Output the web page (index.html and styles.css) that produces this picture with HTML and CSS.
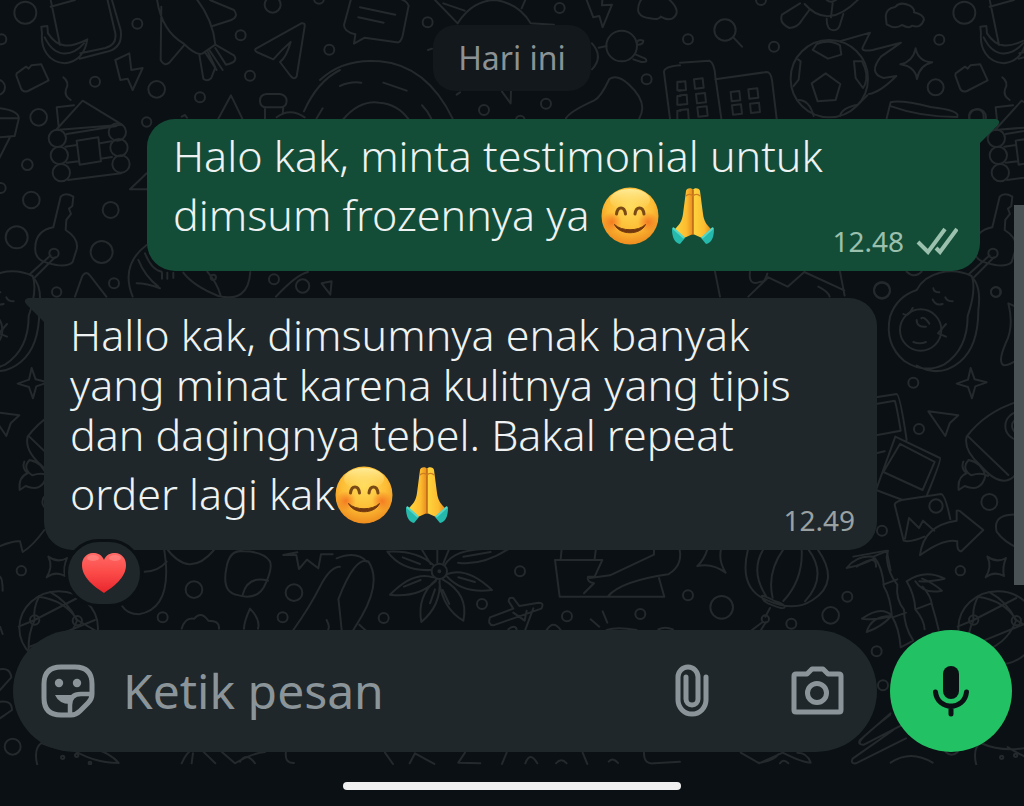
FILE: index.html
```html
<!DOCTYPE html>
<html lang="id">
<head>
<meta charset="utf-8">
<meta name="viewport" content="width=device-width, initial-scale=1">
<title>Chat</title>
<link rel="stylesheet" href="styles.css">
</head>
<body>
<svg class="defs" aria-hidden="true">
  <defs>
    <radialGradient id="face" cx=".5" cy=".35" r=".65"><stop offset="0" stop-color="#ffdc5a"/><stop offset=".6" stop-color="#fdbd35"/><stop offset="1" stop-color="#ee8d1f"/></radialGradient>
    <radialGradient id="blush"><stop offset="0" stop-color="#f2661d" stop-opacity=".75"/><stop offset="1" stop-color="#f2661d" stop-opacity="0"/></radialGradient>
    <linearGradient id="shine" x2="0" y2="1"><stop offset="0" stop-color="#fff0a0" stop-opacity=".9"/><stop offset="1" stop-color="#ffe070" stop-opacity="0"/></linearGradient>
    <linearGradient id="hand" x2="1" y2="0"><stop offset="0" stop-color="#ffd53f"/><stop offset=".65" stop-color="#fcbb2f"/><stop offset="1" stop-color="#e88a1c"/></linearGradient>
    <linearGradient id="heart" x2="0" y2="1"><stop offset="0" stop-color="#ff6a66"/><stop offset=".5" stop-color="#fb4a48"/><stop offset="1" stop-color="#e8252b"/></linearGradient>
    <symbol id="smile" viewBox="0 0 58 58">
      <circle cx="29" cy="29" r="28.5" fill="url(#face)"/>
      <ellipse cx="29" cy="13" rx="20" ry="11" fill="url(#shine)"/>
      <circle cx="11" cy="35" r="10" fill="url(#blush)"/><circle cx="47" cy="35" r="10" fill="url(#blush)"/>
      <path d="M15.500 27c1-8 8-8 9 0M34 27c1-8 8-8 9 0" fill="none" stroke="#7a4a16" stroke-width="3" stroke-linecap="round"/>
      <path d="M13.500 37.500c7 7 24 7 31 0-5 11-26 11-31 0z" fill="#71380f" stroke="#71380f" stroke-width="1" stroke-linejoin="round"/>
    </symbol>
    <symbol id="pray" viewBox="0 0 58 58">
      <path d="M22 4c0-3 6-4 7-1v44l-9 4-9-9c5-5 7-8 8-15z" fill="url(#hand)"/>
      <path d="M36 4c0-3-6-4-7-1v44l9 4 9-9c-5-5-7-8-8-15z" fill="url(#hand)"/>
      <path d="M29 3v45" stroke="#b8661a" stroke-width="1.500"/>
      <path d="M22 9c2-2 5-2 7 0 2-2 5-2 7 0" fill="none" stroke="#ce7d20" stroke-width="1.500"/>
      <path d="M9 40l12 11-5 6c-5-1-8-6-8-15z" fill="#25b9ac"/><path d="M49 40L37 51l5 6c5-1 8-6 8-15z" fill="#25b9ac"/>
      <path d="M9 41l11 10M49 41L38 51" stroke="#55d8c8" stroke-width="2"/>
    </symbol>
  </defs>
</svg>

<main class="chat">
  <svg class="doodles" viewBox="0 0 1024 765" preserveAspectRatio="xMinYMin slice" aria-hidden="true">
    <defs>
      <g id="edge">
        <g transform="scale(.3333)">
          <path d="M148-20L180 135M318-20l28 120q5 35-30 44l-75 16M330-20l32 110q8 55-45 66l-78 20M152 20L225 0M124 80l18-2 2 22c28 42 60 48 118 18-8 50-35 68-68 72-50-4-72-45-68-90zM134 112c32 65 82 58 118 18"/>
          <path d="M50 220l28-20 8 6 8-10 30-3 22 48-62 32q-16 5-21-8l-14-38zM190 232q20 14 8 36-6 20 14 32"/>
          <path d="M168 390l80-88 118 72zM176 380l-6-58 52-6M200 402l150-24M196 440l34-5M200 488l36-4M204 540l160-20M300 430l34-6M302 476l34-5M230 422l65-10 8 72-64 10z"/>
          <circle cx="172" cy="415" r="26"/><circle cx="178" cy="466" r="26"/><circle cx="184" cy="518" r="26"/><circle cx="352" cy="396" r="26"/><circle cx="357" cy="443" r="26"/><circle cx="363" cy="492" r="26"/>
          <path d="M160 682l22-92q14-14 38 0l-3 28-10 8 6 16-14 18-2 30q40 25 33 58l-12 38q-20 20-78 2-38-10-34-48 2-48 54-58zM152 766L90 822M165 772l-60 60"/>
          <circle cx="162" cy="760" r="14"/><circle cx="76" cy="38" r="33"/><circle cx="116" cy="352" r="25"/><circle cx="82" cy="494" r="16"/><circle cx="94" cy="600" r="25"/><circle cx="50" cy="712" r="33"/><circle cx="170" cy="876" r="14"/>
        </g>
        <g transform="translate(0 530) scale(.3333)">
          <path d="M145 80q28 20 56 4M140 142q26-20 55-4M145 80q15 30-5 62M201 84q-12 28-6 54"/>
          <ellipse cx="176" cy="294" rx="118" ry="110"/>
          <path d="M118 198q-20 38-14 72l-48 20M104 270q-20 40-18 90M104 270l128-66M115 200q80 10 117 70l64 38M232 270q-30 80-120 100M150 186q55 30 80 84M90 350l195-80"/>
          <circle cx="104" cy="270" r="14"/><circle cx="232" cy="272" r="14"/><circle cx="64" cy="122" r="14"/><circle cx="38" cy="650" r="24"/>
          <path d="M112 705q-12-48 12-66 70 30 150 12 60 20 82 48-80 0-150-48M0 480l34-38q-4-30-34-24M0 565l36-25q0-30-36-25"/>
          <circle cx="188" cy="682" r="5"/><circle cx="230" cy="676" r="5"/><circle cx="270" cy="699" r="4"/>
        </g>
      </g>
      <g id="fruit" transform="translate(860 270) scale(.3333)">
        <path d="M90 140q20-60 80-80Q190 20 240 8t95 10q15 40-12 120 0 100-70 145-60 30-120-10-60-50-43-133zM335 20q30 30 20 100 0 110-55 155-60 50-130 12M220 55q2 12 18 12M256 82q5 12 22 12M218 88q8 20 30 14M170 150q0 22 28 20M184 145q8-8 24 16M160 216q20 8 38 0"/>
        <circle cx="182" cy="180" r="62"/><path d="M130 132q15 10 28-18M258 162l-24 28 24 10"/>
        <path d="M332 294l12 34 36 9-34 12-10 36-12-34-34-10 34-12zM205 424l90 12-26 24-13 38z"/>
        <path d="M490 390q-110 30-170 110-10 40 40 85 60 70 100 36l80-80M325 500l120 115M310 575q-8 20 10 35-28 10-24 50l18-12q50 20 62-30-10-40-50-48-24 24 8 46 30-10 50 2"/>
        <circle cx="478" cy="468" r="42"/><circle cx="478" cy="468" r="22"/><circle cx="388" cy="696" r="24"/>
        <path d="M490 120l-45-20q18 70-8 120-25 58-5 66 20 0 58-30M490 735q-95-10-80 50 28 40 90 58"/>
      </g>
    </defs>
    <use href="#edge"/><use href="#edge" x="939"/>
    <use href="#fruit"/><use href="#fruit" x="-939"/>
    <g transform="scale(.3333)">
      <path d="M470-10q12 100 80 140 40 40 58 30l38-26q-8-80-62-144M484 20l-2 160q10 20 26 8l44-52M630 0l72 30q15 20-8 30l-56 18M600 164l-2 0 12 72q12 10 24-2l12-32-22-46M646 134l56 32q15 20-24 28l-32-50M616 158l34 52M628 150l40 60"/>
      <path d="M768 146L904 70q12-2 10 10l-24 150q-8 10-18-2l-32-42q20-15 32-60-26 22-52 52l-50-22q-8-6-2-10zM346 180l42-20 6 50 34-6-30 66-15-34-22 4z"/>
      <path d="M655 356l38-70 34 70M545 350l10-5 6 8M780 302q0-18 20-20h40q20 4 20 20 0 20-20 20h-40q-20 0-20-20zM795 324v32M850 322l-2 20M830 352q40-30 84 0M912 334q40-90 108-124M968 325l-18 30M440 520l-50 48h52M0 325q60 8 56 32L44 408 0 412M0 355h56M30 412L-10 490"/>
      <path d="M440 735q-80 60-42 155M410 850q30 0 70 15M415 780q20 50 60 80M435 760q20 50 50 55M486 818v18M502 818v18M520 818v16M550 818q30 40 105 70 90 22 96-72M622 815q30 35 40 72M828 890q60-65 96-74M965 850l30-6-4 40zM225 890l22-62q12-18 24 0l48 62"/>
      <circle cx="908" cy="858" r="20"/><circle cx="640" cy="832" r="8"/>
      <circle cx="412" cy="71" r="15"/><circle cx="722" cy="106" r="15"/><circle cx="988" cy="149" r="15"/><circle cx="750" cy="227" r="15"/><circle cx="600" cy="292" r="15"/><circle cx="470" cy="268" r="25"/><circle cx="440" cy="366" r="14"/><circle cx="285" cy="245" r="15"/><circle cx="332" cy="630" r="24"/><circle cx="305" cy="756" r="33"/><circle cx="342" cy="850" r="15"/><circle cx="822" cy="838" r="15"/><circle cx="818" cy="14" r="24"/><circle cx="4" cy="118" r="15"/><circle cx="-8" cy="262" r="23"/><circle cx="2" cy="564" r="15"/><circle cx="957" cy="-4" r="15"/>
    </g>
    <g transform="translate(340) scale(.3333)">
      <path d="M35-10L12 75q0 20 34 28l-4 28 32-18 96 14q12 2 18-20l18-90q-5-15-30-22M60 22l106 22M55 52l76 16M285 0l68 70q45-70 115-70 70 12 104 70l70 4M310 10l64 22M545 25l12-28M264 150l12-4M740 0l20 52 18-4 10 34 28-68-30 2 2-26M900 5q-20 45 30 50 25 6 32-5 20 12 36 5 28-20-8-54-20-25-48-8-30-10-42 12z"/>
      <circle cx="845" cy="138" r="46"/><path d="M756 130q36 40 0 78M800 138l-24 5M890 128q5-12 20-6 0 12-18 12M888 164l28 12q10 12-12 10l-24-8"/>
      <path d="M-60 240q70-66 180-56 140 12 218 172M8 360q50-60 110-52 55 4 88 50M0 258q30-14 64-10M130 248l70 24M246 316q18 18 28 40M350 284l10-7M486 275l26 35 1-36M678 355q10-20 85-54 20-10 45-64 24-16 58 16 60 55 32 102M990 356l-18-140q0-16 48-20M1022 245h-10v26h10M1022 288h-10v26h10M1022 332h-10v25"/>
      <circle cx="263" cy="67" r="15"/><circle cx="659" cy="24" r="15"/><circle cx="432" cy="330" r="15"/><circle cx="618" cy="311" r="15"/><circle cx="920" cy="238" r="15"/><circle cx="541" cy="360" r="13"/>
    </g>
    <g transform="translate(680) scale(.3333)">
      <circle cx="135" cy="90" r="32"/><path d="M160 112l26 28M360 10l-54 34q-10 25 22 40 26-2 38-24l22-30M374 12q70 80 162-15M440 0q12 10 28 0M458 10l-5 42M440 56q0 34 20 35 18 0 22-24l8-25M618 55q-5-28 28-34 14-18 44-4 15 10 12 20 30 8 30 22-10 28-36 18-8 10-30-2-20 14-46-2z"/>
      <circle cx="448" cy="236" r="116"/><path d="M395 250l42-30 44 32-14 48-54 4zM398 150l12-18q40-16 70 4l4 28-40 12zM354 178l8 6-6 55-16 20M522 184h24q22 40 8 72l-5 8-22-30zM356 300q32 0 45 48M480 348q5-25 54-34l28-28M480 124l90-26-22 44q-5 14 30 8l85-22-60 42q-40 50 8 64l38-6q-50 50-82 54"/>
      <path d="M0 188l88-6q16 8 18 48l18 126M106 238l154-22q12 0 16 24l14 116M-6 246l22-2 2 26-22 2M42 238l26-3 3 28-26 3zM0 286l20-2 2 28-22 2M48 282l27-3 3 28-27 3zM0 330l24-2 2 28M52 322l28-3 3 28-28 3zM152 276l26-3 3 28-26 3zM205 268l27-3 3 28-27 3zM156 316l27-3 3 28-27 3zM210 311l27-3 3 28-27 3z"/>
      <path d="M620 355l12-48q30-8 120 14 90 10 80 30-110 0-198-32M707 145q8 40 50 42-38 8-46 50-6-38-50-44 38-8 46-48zM868 356q-5-28 26-28 20 4 17 28"/>
      <circle cx="24" cy="118" r="15"/><circle cx="282" cy="140" r="15"/><circle cx="778" cy="119" r="15"/><circle cx="767" cy="262" r="24"/><circle cx="243" cy="0" r="15"/><circle cx="606" cy="870" r="24"/>
      <path d="M105 815l15 75M210 815q-6 45 32 30 12 5 20-24M205 890l60-58 58 28 50-44 120 55M480 815l14 72M415 860q30 15 34 30M680 815q25 22 45 0"/>
    </g>
    <g transform="translate(860 270) scale(.3333)">
      <path d="M48 382l62-10q10 2 30 138M48 402l56-10q5 10 18 90l-74 14M106 500l134 64q5 5-40 114M106 500L48 660M48 550l26-6M48 660l80 30M120 522l104 54-36 84-118-54zM125 690q-25 8-20 18l26 104q20 6 62-12M125 690l118-18q12 0 28 76M135 806l12-62 30 30 12-22 34 30M180 856q10-90 110-104v-30q10-2 15 6l65 52-66 64q-14 0-12-30-40-10-112 42zM-20 860l100-18 12 60M-10 890q60-40 58 0"/>
      <circle cx="228" cy="708" r="20"/><circle cx="66" cy="62" r="24"/><circle cx="408" cy="66" r="15"/><circle cx="160" cy="338" r="15"/><circle cx="177" cy="477" r="15"/><circle cx="66" cy="782" r="15"/>
    </g>
    <g transform="translate(0 530) scale(.3333)">
      <path d="M0 48q40-16 60-14l8 32q30-18 65-66M0 140q8 5 8 42M0 290l8 22M492 55q30 180-75 198-35 0-50-24M434 125q40 0 66-30M496 50q70 100 146 10M680 110q10-52 50-46 60 0 80 30 8 20-12 64-22 58-90 36-44-10-28-84zM728 194q16-58 76-42M850 75l42-8M855 75h34l8 42 24-28 34 26 8-42h35M545 296q10-35 38-30 20-25 42 6 35 0 32 24M732 296q0-20 18-60 32 32 24 60M880 300q50-70 80-130t60-60M980 270q10 20 5 28"/>
      <path d="M545 700q15-32 30-40M575 700l4-30M610 665l36 35M665 665l40 35q50-30 90-34M720 695q20-30 45 5M858 665q-5 35 24 34"/>
      <circle cx="488" cy="262" r="15"/><circle cx="582" cy="179" r="25"/><circle cx="882" cy="188" r="25"/><circle cx="848" cy="262" r="15"/>
    </g>
    <g transform="translate(340 540) scale(.3333)">
      <circle cx="298" cy="94" r="23"/><circle cx="298" cy="94" r="3"/>
      <path d="M280 75q-50-45-138-40 45 60 132 55M314 76q30-60 190-48-80 50-150 40M280 112q-60-20-130 52 85 10 138-42M290 118q-60 50-46 128 60-50 55-126M308 118q80 45 62 124-60-35-72-115M322 102q60-22 134 48-90 12-138-44M272 72l-28-46M292 68V28M310 70l18-44M188 52l52 20M270 190l15-42M192 140l50-20M308 150l20 42M355 112l50 14M370 50l82-14"/>
      <path d="M5 270q-10-100-10-92 50-130 90-114 40 60-20 165L40 270M58 254l20 18M-10 55q60-24 90 10M450 232l70-26-14-22q0-14 14-10l18 24 58-10q18 0 8 18l-144 50q-18-2-10-24zM520 218l34 24 6-30M580 205l-24 64M620 270q20-32 42 0M505 268q20-15 25 0M752 238l26 22M788 214l14 34"/>
      <path d="M645 60h142L764 110h-20q-5 15 18 20l-30 30M645 60l14 110h314l-16-56M662 58l5-50M764 56l6-46M810 106l132-62V30M805 168q40-45 180-65 50-30 30-90M750 114l60-8M800 270q30-10 90 0M955 268q20-10 44 0"/>
      <path d="M135 638l24 34M225 640q-5 10-16 30M225 640l58 32M375 638l-20 30 66 2M500 638l-14 34M556 670q14-38 36 0M648 670q16-18 32 0M728 638l14 34M806 665q14-14 28 4M912 638q0 36 30 32l78-5"/>
      <circle cx="131" cy="234" r="15"/><circle cx="426" cy="192" r="15"/><circle cx="540" cy="94" r="15"/><circle cx="681" cy="229" r="15"/><circle cx="901" cy="222" r="15"/>
    </g>
    <g transform="translate(680 540) scale(.3333)">
      <path d="M82 28q-10 32-30 50 45-10 85 20-22-35-14-70M204 28q-30 120 60 154 78 35 134-2 84-54 15-152M250 28q-40 65 8 140M310 28q-50 70-32 145M365 28q5 90-55 155M385 28q60 80-10 156M246 168q-2 12 18 22 48 20 50 12 0-10-28-18-40-20-40-16zM270 204l-14 26M248 246l-32 24M258 246l-15 24"/>
      <circle cx="256" cy="237" r="11"/>
      <path d="M500 84q30-40 80-34l44-18-4 20q5 50 32 82-5 45 20 75 0 50 28 93l-38 20q-5-60-26-92-5-60-24-90-5-60-28-86-30 20-84 30zM610 134l42-16M638 232l40-14M634 226q-30-30-88 10 45 5 82-6M634 228q-60 0-74 48 45-15 74-48M680 124q55-38 114-8-45 10-76 8M706 124q25 40 80 28-30-25-60-36M680 124q24 40 26 84 26 30 28 60M728 140q26 30 28 55 12 40 20 74M706 208l48-18"/>
      <path d="M632 520l-92 80q-8 15 12 14l112-58M540 610q-10-8 90-85M640 570l-122 86q-8 16 10 14l150-75M632 668q60-40 126 0M182 638l56 32 70-32M308 638q60 30 84 30-10-30-40-30M236 668q44-4 60-26M300 670q10-15 25 0"/>
      <circle cx="24" cy="166" r="15"/><circle cx="125" cy="202" r="34"/><circle cx="334" cy="251" r="15"/><circle cx="502" cy="170" r="15"/><circle cx="452" cy="226" r="25"/><circle cx="590" cy="334" r="15"/><circle cx="609" cy="436" r="15"/>
    </g>
  </svg>

  <section class="messages" aria-label="Pesan">
    <time class="day">Hari ini</time>
    <article class="bubble bubble-out">
      <svg class="tail" viewBox="0 0 24 28" aria-hidden="true"><path d="M0 0H20q6 2 1 7L4 24V28H0z"/></svg>
      <p class="text">Halo kak, minta testimonial untuk<br>dimsum frozennya ya <svg class="emoji" role="img" aria-label="senyum"><use href="#smile"/></svg> <svg class="emoji hands" role="img" aria-label="tangan"><use href="#pray"/></svg></p>
      <div class="meta"><time>12.48</time>
        <svg class="ticks" viewBox="0 0 42 28" role="img" aria-label="Terkirim"><path d="M2 15l10 10L29 2M20 21l4 4L41 2"/></svg>
      </div>
    </article>
    <article class="bubble bubble-in">
      <svg class="tail" viewBox="0 0 24 28" aria-hidden="true"><path d="M24 0H4q-6 2-1 7L20 24V28H24z"/></svg>
      <p class="text">Hallo kak, dimsumnya enak banyak<br>yang minat karena kulitnya yang tipis<br>dan dagingnya tebel. Bakal repeat<br>order lagi kak<svg class="emoji" role="img" aria-label="senyum"><use href="#smile"/></svg> <svg class="emoji hands" role="img" aria-label="tangan"><use href="#pray"/></svg></p>
      <div class="meta"><time>12.49</time></div>
      <button class="reaction" type="button" aria-label="Reaksi hati">
        <svg viewBox="0 0 44 40" aria-hidden="true"><path d="M22 40C13 34 0 25 0 12 0-2 18-4 22 7 26-4 44-2 44 12c0 13-13 22-22 28z" fill="url(#heart)"/><ellipse cx="11" cy="5" rx="6" ry="3" fill="#ffb0a8" opacity=".35"/><ellipse cx="33" cy="5" rx="6" ry="3" fill="#ffb0a8" opacity=".35"/></svg>
      </button>
    </article>
  </section>
  <div class="scrollbar" aria-hidden="true"></div>

  <form class="composer">
    <div class="field">
      <button class="icon" type="button" aria-label="Stiker">
        <svg width="54" height="54" viewBox="0 0 54 54"><path d="M20 3h14q17 0 17 17v10q0 5-4 9l-8 8q-4 4-9 4H20Q3 51 3 34V20Q3 3 20 3z" fill="none" stroke="currentColor" stroke-width="5"/><path d="M29 51V41q0-11 11-11h11" fill="none" stroke="currentColor" stroke-width="4.500"/><circle cx="18" cy="19" r="4.200" fill="currentColor"/><circle cx="36" cy="19" r="4.200" fill="currentColor"/><path d="M14 31h23q-6 2-8 9-11 0-15-9z" fill="currentColor"/></svg>
      </button>
      <input class="input" type="text" placeholder="Ketik pesan" aria-label="Ketik pesan">
      <button class="icon" type="button" aria-label="Lampirkan">
        <svg width="36" height="54" viewBox="0 0 36 54"><path d="M32 13v23a14 14 0 0 1-28 0V13a10 10 0 0 1 20 0v22a6 6 0 0 1-12 0V13" fill="none" stroke="currentColor" stroke-width="5" stroke-linecap="round"/></svg>
      </button>
      <button class="icon camera" type="button" aria-label="Kamera">
        <svg width="54" height="50" viewBox="0 0 54 50"><path d="M6 8h11l5-5h11l5 5h11q2 0 2 2v34q0 2-2 2H6q-2 0-2-2V10q0-2 2-2z" fill="none" stroke="currentColor" stroke-width="5" stroke-linejoin="round"/><circle cx="27" cy="27" r="9.500" fill="none" stroke="currentColor" stroke-width="5"/></svg>
      </button>
    </div>
    <button class="mic" type="button" aria-label="Pesan suara">
      <svg width="38" height="52" viewBox="0 0 38 52"><rect x="11" y="1" width="16" height="33" rx="8" fill="currentColor"/><path d="M3.500 27c2 19 29 19 31 0M19 41v8" fill="none" stroke="currentColor" stroke-width="5" stroke-linecap="round"/></svg>
    </button>
  </form>
</main>
<footer class="system-bar"><div class="home"></div></footer>
</body>
</html>
```
FILE: styles.css
```css
* { box-sizing: border-box; }
body {
  margin: 0;
  min-height: 100vh;
  display: flex;
  flex-direction: column;
  background: #0a1014;
  color: #eef2f2;
  font-family: "Noto Sans", "Open Sans", sans-serif;
}
button { border: 0; padding: 0; background: none; color: inherit; font: inherit; }
svg { display: block; }
.defs { position: absolute; width: 0; height: 0; }

.chat {
  position: relative;
  flex: 1;
  display: flex;
  flex-direction: column;
  overflow: hidden;
}
.doodles {
  position: absolute;
  inset: 0;
  width: 100%;
  height: 100%;
  fill: none;
  stroke: #24292c;
  stroke-width: 6;
  stroke-linecap: round;
  stroke-linejoin: round;
}
.messages {
  position: relative;
  flex: 1;
  display: flex;
  flex-direction: column;
  padding: 25px 44px 0;
}
.day {
  align-self: center;
  padding: 12px 25px;
  border-radius: 22px;
  background: #12181b;
  color: #8b9295;
  font-size: 32px;
  line-height: 42px;
  margin-bottom: 28px;
}
.bubble {
  position: relative;
  width: 89%;
  padding: 12px 26px;
  border-radius: 28px;
  display: flex;
  flex-direction: column;
}
.bubble-out {
  align-self: flex-end;
  background: #144d37;
  border-top-right-radius: 0;
  margin-bottom: 27px;
}
.bubble-in {
  background: #1f272a;
  border-top-left-radius: 0;
}
.tail { position: absolute; top: 0; width: 24px; height: 28px; }
.bubble-out .tail { left: calc(100% - 4px); fill: #144d37; }
.bubble-in .tail { right: calc(100% - 4px); fill: #1f272a; }
.text {
  margin: 0;
  font-size: 43px;
  font-weight: 300;
  line-height: 50px;
}
.emoji {
  display: inline-block;
  width: 58px;
  height: 58px;
  margin-top: 6px;
  vertical-align: -14px;
}
.hands { margin-left: -6px; }
.meta {
  align-self: flex-end;
  display: flex;
  align-items: center;
  gap: 12px;
  margin-top: -22px;
  margin-right: -4px;
  font-size: 28px;
  line-height: 36px;
  color: #9aa1a3;
}
.bubble-out .meta { color: #9bc0ae; }
.ticks {
  width: 42px;
  height: 28px;
  fill: none;
  stroke: currentColor;
  stroke-width: 4;
}
.reaction {
  position: absolute;
  top: calc(100% - 11px);
  left: 21px;
  width: 78px;
  height: 68px;
  border: 3px solid #0a1014;
  border-radius: 34px;
  background: #1f272a;
  display: grid;
  place-items: center;
}
.reaction svg { width: 44px; height: 40px; }
.scrollbar {
  position: absolute;
  top: 205px;
  right: 0;
  width: 10px;
  height: 380px;
  background: #4b5256;
}
.composer {
  position: relative;
  display: flex;
  gap: 13px;
  padding: 0 12px 13px 13px;
}
.field {
  flex: 1;
  min-width: 0;
  height: 122px;
  padding: 0 33px 0 28px;
  border-radius: 61px;
  background: #1f272a;
  color: #8b9599;
  display: flex;
  align-items: center;
}
.input {
  flex: 1;
  min-width: 0;
  margin: 0 28px;
  padding: 0;
  border: 0;
  outline: 0;
  background: none;
  color: #eef2f2;
  font: 400 48px/64px "Noto Sans", "Open Sans", sans-serif;
}
.input::placeholder { color: #8b9599; opacity: 1; }
.camera { margin-left: 80px; }
.mic {
  width: 122px;
  height: 122px;
  border-radius: 50%;
  background: #22c163;
  color: #0a1014;
  display: grid;
  place-items: center;
}
.system-bar {
  height: 41px;
  padding-top: 17px;
  background: #0a1014;
}
.home {
  width: 33%;
  height: 8px;
  margin: 0 auto;
  border-radius: 4px;
  background: #f0f0f0;
}
```
